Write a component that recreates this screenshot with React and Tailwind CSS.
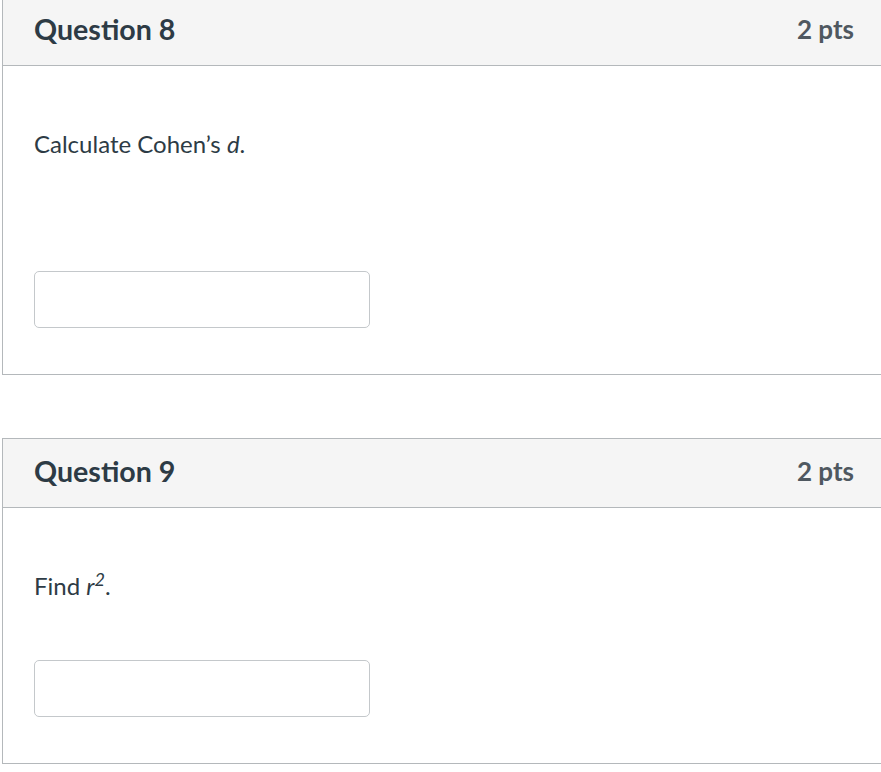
import React from 'react';

const QuestionCard = ({ title, points, children, gapClass, first }) => {
  return (
    <div
      className={`ml-[2px] border-y border-l border-[#b4b8bb] bg-white ${first ? 'mt-[-4px]' : 'mt-[63px]'}`}
    >
      <div className="h-[69px] flex items-center justify-between bg-[#f5f5f5] border-b border-[#b4b8bb] pl-[31px] pr-[27px] pb-[4px]">
        <h2 className="text-[28.6px] font-bold text-[#2d3b45] leading-none">{title}</h2>
        <span className="text-[26px] font-bold text-[#4f5860] leading-none">{points}</span>
      </div>
      <div className="pl-[31px] pt-[60px] pb-[46px]">
        <p className="text-[24px] leading-[36px] text-[#2d3b45]">{children}</p>
        <div className={gapClass}>
          <input
            type="text"
            className="block w-[336px] h-[57px] rounded-[5px] border border-[#c4c8cb] bg-white outline-none"
          />
        </div>
      </div>
    </div>
  );
};

export default function App() {
  return (
    <div className="min-h-screen bg-white overflow-hidden" style={{ fontFamily: 'Lato, "Open Sans", sans-serif' }}>
      <QuestionCard title="Question 8" points="2 pts" gapClass="mt-[109px]" first>
        Calculate Cohen’s <em>d</em>.
      </QuestionCard>
      <QuestionCard title="Question 9" points="2 pts" gapClass="mt-[56px]">
        Find <em>r<sup className="text-[18px] leading-none">2</sup></em>.
      </QuestionCard>
    </div>
  );
}
